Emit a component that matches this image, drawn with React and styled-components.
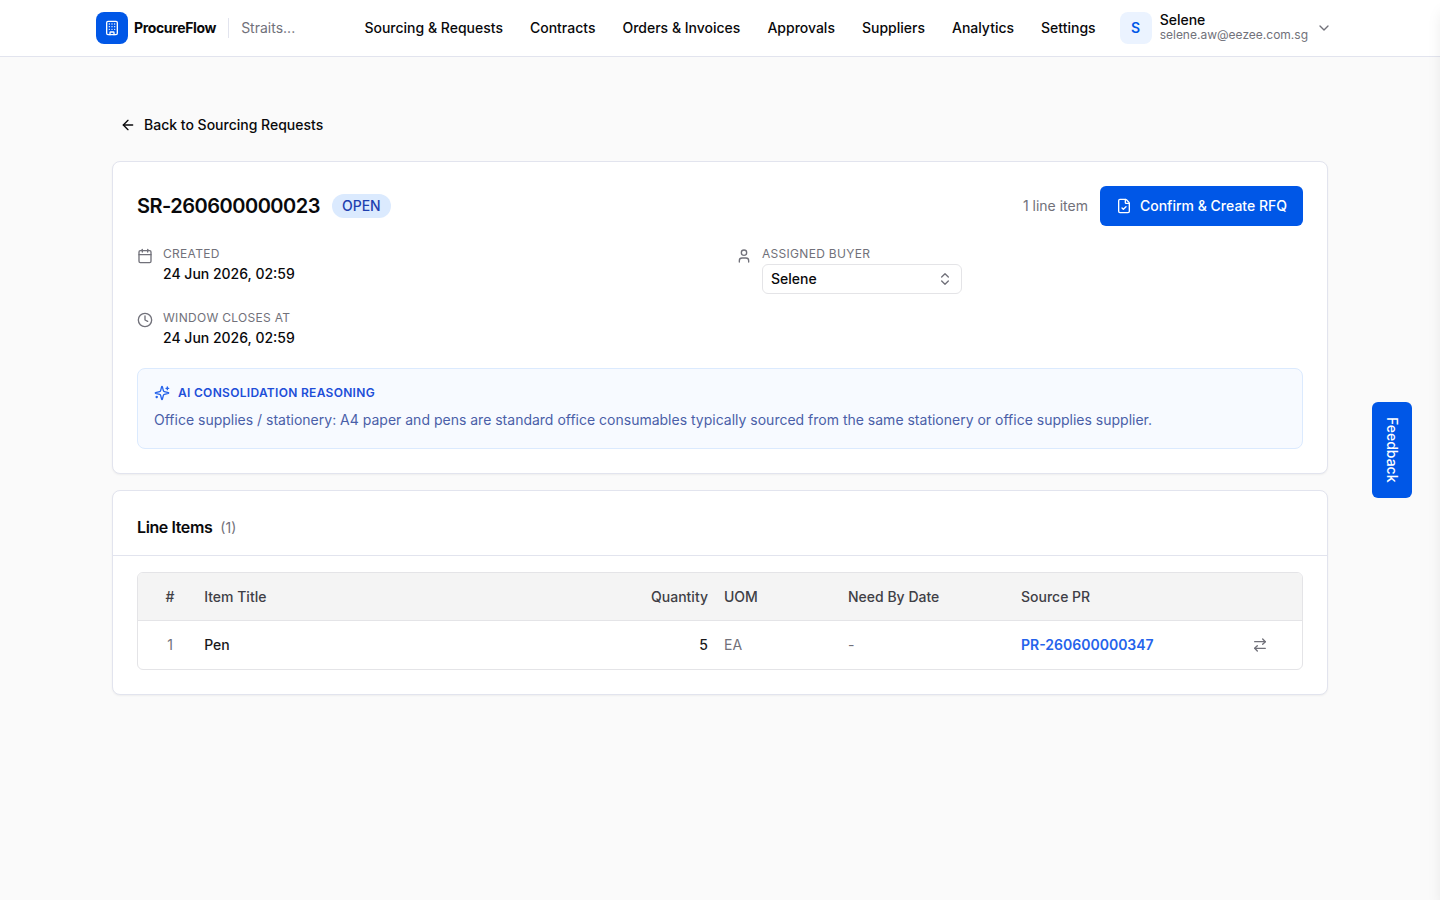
import React, { useState } from 'react';
import styled, { createGlobalStyle } from 'styled-components';
import {
  ArrowLeft,
  ArrowRightLeft,
  Building,
  Calendar,
  ChevronDown,
  ChevronsUpDown,
  Clock,
  FileCheck,
  User,
} from 'lucide-react';

const navLinks = [
  'Sourcing & Requests',
  'Contracts',
  'Orders & Invoices',
  'Approvals',
  'Suppliers',
  'Analytics',
  'Settings',
];

const lineItems = [
  { id: 1, title: 'Pen', quantity: 5, uom: 'EA', needBy: '-', pr: 'PR-260600000347' },
];

const GlobalStyle = createGlobalStyle`
  *,
  *::before,
  *::after {
    box-sizing: border-box;
  }

  body {
    margin: 0;
    background: #fafafa;
    color: #09090b;
    font-family: Inter, 'Liberation Sans', sans-serif;
    font-size: 14px;
    line-height: 20px;
    overflow-x: hidden;
    -webkit-font-smoothing: antialiased;
  }

  button,
  select {
    font: inherit;
    color: inherit;
  }

  h1,
  h2,
  p {
    margin: 0;
  }

  a {
    color: inherit;
    text-decoration: none;
  }

  svg {
    flex-shrink: 0;
  }
`;

const Header = styled.header`
  background: #fff;
  border-bottom: 1px solid #e2e4ee;
`;

const HeaderInner = styled.div`
  max-width: 1280px;
  height: 56px;
  margin: 0 auto;
  padding: 0 28px 0 16px;
  display: flex;
  align-items: center;
  justify-content: space-between;
`;

const Brand = styled.a`
  display: flex;
  align-items: center;
  gap: 6px;
`;

const Logo = styled.span`
  width: 32px;
  height: 32px;
  display: grid;
  place-items: center;
  border-radius: 8px;
  background: #0057e7;
  color: #fff;
`;

const BrandName = styled.span`
  font-weight: 700;
  letter-spacing: -0.025em;
`;

const Company = styled.span`
  margin-left: 6px;
  padding-left: 12px;
  border-left: 1px solid #e2e4ee;
  color: #71717a;
`;

const HeaderRight = styled.div`
  display: flex;
  align-items: center;
  gap: 24px;
`;

const Nav = styled.nav`
  display: flex;
  gap: 27px;
  font-weight: 500;
  white-space: nowrap;
`;

const Account = styled.button`
  display: flex;
  align-items: center;
  gap: 8px;
  padding: 0;
  border: 0;
  background: none;
  text-align: left;
`;

const Avatar = styled.span`
  width: 32px;
  height: 32px;
  display: grid;
  place-items: center;
  border-radius: 8px;
  background: #ebf3ff;
  color: #0057e7;
  font-weight: 600;
`;

const AccountText = styled.span`
  display: flex;
  flex-direction: column;
  line-height: 14px;
  font-weight: 500;

  small {
    font-size: 12px;
    line-height: 16px;
    font-weight: 400;
    color: #71717a;
  }
`;

const Main = styled.main`
  max-width: 1280px;
  margin: 0 auto;
  padding: 48px 32px;
  display: flex;
  flex-direction: column;
  gap: 16px;
`;

const BackLink = styled.a`
  align-self: flex-start;
  height: 40px;
  padding: 0 8px;
  display: flex;
  align-items: center;
  gap: 8px;
  font-weight: 500;
`;

const Card = styled.section`
  background: #fff;
  border: 1px solid #e2e4ee;
  border-radius: 8px;
  box-shadow: 0 1px 2px rgba(0, 0, 0, 0.05);
`;

const Summary = styled(Card)`
  padding: 24px;
`;

const SummaryTop = styled.div`
  display: flex;
  align-items: center;
  gap: 12px;
  margin-bottom: 18px;
`;

const Title = styled.h1`
  font-size: 20px;
  line-height: 28px;
  font-weight: 600;
  letter-spacing: -0.025em;
`;

const Badge = styled.span`
  padding: 2px 10px;
  border-radius: 12px;
  background: #dbeafe;
  color: #1e40af;
  font-weight: 500;
`;

const Count = styled.span`
  margin-left: auto;
  color: #71717a;
`;

const PrimaryButton = styled.button`
  height: 40px;
  padding: 0 16px;
  display: flex;
  align-items: center;
  gap: 8px;
  border: 0;
  border-radius: 6px;
  background: #0057e7;
  color: #fff;
  font-weight: 500;
`;

const Details = styled.div`
  display: grid;
  grid-template-columns: 1fr 1fr;
  gap: 14px 32px;
  margin-bottom: 20px;
`;

const Detail = styled.div`
  display: flex;
  gap: 10px;

  > svg {
    margin-top: 4px;
    color: #71717a;
  }
`;

const Label = styled.label`
  display: block;
  color: #71717a;
  font-size: 12px;
  letter-spacing: 0.025em;
  text-transform: uppercase;
`;

const Value = styled.output`
  display: block;
  font-weight: 500;
`;

const SelectBox = styled.div`
  position: relative;
  width: 200px;

  select {
    display: block;
    width: 100%;
    height: 30px;
    padding: 0 8px;
    border: 1px solid #e4e4e7;
    border-radius: 6px;
    background: #fff;
    font-weight: 500;
    appearance: none;
  }

  svg {
    position: absolute;
    top: 7px;
    right: 9px;
    color: #71717a;
    pointer-events: none;
  }
`;

const Reasoning = styled.div`
  padding: 14px 16px 18px;
  border: 1px solid #dbeafe;
  border-radius: 8px;
  background: #f7faff;
  color: #4a5fa8;
`;

const ReasoningTitle = styled.h2`
  display: flex;
  align-items: center;
  gap: 8px;
  margin-bottom: 7px;
  color: #1d4ed8;
  font-size: 12px;
  line-height: 20px;
  font-weight: 600;
  letter-spacing: 0.025em;
  text-transform: uppercase;
`;

const CardHeader = styled.div`
  display: flex;
  align-items: baseline;
  gap: 8px;
  padding: 24px 24px 16px;
  border-bottom: 1px solid #e2e4ee;
  color: #71717a;
`;

const CardTitle = styled.h2`
  color: #09090b;
  font-size: 16px;
  line-height: 24px;
  font-weight: 600;
  letter-spacing: -0.025em;
`;

const TableFrame = styled.div`
  margin: 16px 24px 24px;
  border: 1px solid #e4e4e7;
  border-radius: 6px;
  overflow: hidden;
`;

const Table = styled.table`
  width: 100%;
  border-collapse: separate;
  border-spacing: 0;
  table-layout: fixed;

  th,
  td {
    height: 48px;
    padding: 0 8px;
  }

  th:first-child,
  td:first-child {
    padding-left: 14px;
  }
`;

const HeadCell = styled.th`
  width: ${(props) => props.$width || 'auto'};
  background: #f4f4f4;
  border-bottom: 1px solid #e4e4e7;
  color: #3f3f46;
  font-weight: 500;
  text-align: ${(props) => props.$align || 'left'};
`;

const Cell = styled.td`
  color: ${(props) => (props.$muted ? '#71717a' : '#18181b')};
  font-weight: ${(props) => (props.$muted ? 400 : 500)};
  text-align: ${(props) => props.$align || 'left'};
`;

const PrLink = styled.a`
  color: #2563eb;
  font-weight: 600;
`;

const IconButton = styled.button`
  width: 32px;
  height: 32px;
  display: inline-grid;
  place-items: center;
  padding: 0;
  border: 0;
  background: none;
  color: #71717a;
  vertical-align: middle;
`;

const FeedbackButton = styled.button`
  position: fixed;
  top: 50%;
  right: 28px;
  width: 40px;
  height: 96px;
  margin-top: -48px;
  padding: 0;
  display: flex;
  align-items: center;
  justify-content: center;
  border: 0;
  border-radius: 6px;
  background: #0057e7;
  color: #fff;
  font-weight: 500;
  writing-mode: vertical-rl;
`;

// closed side drawer, only its shadow reaches the page
const Drawer = styled.aside`
  position: fixed;
  top: 0;
  bottom: 0;
  left: 100%;
  width: 400px;
  background: #fff;
  box-shadow: 0 10px 15px -3px rgba(0, 0, 0, 0.1), 0 4px 6px -4px rgba(0, 0, 0, 0.1);
`;

const SparklesIcon = () => (
  <svg
    width="16"
    height="16"
    viewBox="0 0 24 24"
    fill="none"
    stroke="#2563eb"
    strokeWidth="2"
    strokeLinecap="round"
    strokeLinejoin="round"
    aria-hidden="true"
  >
    <path d="M9.937 15.5A2 2 0 0 0 8.5 14.063l-6.135-1.582a.5.5 0 0 1 0-.962L8.5 9.936A2 2 0 0 0 9.937 8.5l1.582-6.135a.5.5 0 0 1 .963 0L14.063 8.5A2 2 0 0 0 15.5 9.937l6.135 1.581a.5.5 0 0 1 0 .964L15.5 14.063a2 2 0 0 0-1.437 1.437l-1.582 6.135a.5.5 0 0 1-.963 0z" />
    <path d="M20 3v4" />
    <path d="M22 5h-4" />
    <path d="M4 17v2" />
    <path d="M5 18H3" />
  </svg>
);

const App = () => {
  const [buyer, setBuyer] = useState('Selene');

  return (
    <>
      <GlobalStyle />
      <Header>
        <HeaderInner>
          <Brand href="#">
            <Logo>
              <Building size={16} />
            </Logo>
            <BrandName>ProcureFlow</BrandName>
            <Company>Straits...</Company>
          </Brand>
          <HeaderRight>
            <Nav>
              {navLinks.map((link) => (
                <a key={link} href="#">{link}</a>
              ))}
            </Nav>
            <Account>
              <Avatar>S</Avatar>
              <AccountText>
                Selene
                <small>selene.aw@eezee.com.sg</small>
              </AccountText>
              <ChevronDown size={16} color="#71717a" />
            </Account>
          </HeaderRight>
        </HeaderInner>
      </Header>

      <Main>
        <BackLink href="#">
          <ArrowLeft size={16} />
          Back to Sourcing Requests
        </BackLink>

        <Summary>
          <SummaryTop>
            <Title>SR-260600000023</Title>
            <Badge>OPEN</Badge>
            <Count>1 line item</Count>
            <PrimaryButton>
              <FileCheck size={16} />
              Confirm &amp; Create RFQ
            </PrimaryButton>
          </SummaryTop>

          <Details>
            <Detail>
              <Calendar size={16} />
              <div>
                <Label htmlFor="created">Created</Label>
                <Value id="created">24 Jun 2026, 02:59</Value>
              </div>
            </Detail>
            <Detail>
              <User size={16} />
              <div>
                <Label htmlFor="buyer">Assigned Buyer</Label>
                <SelectBox>
                  <select id="buyer" value={buyer} onChange={(e) => setBuyer(e.target.value)}>
                    <option>Selene</option>
                  </select>
                  <ChevronsUpDown size={16} />
                </SelectBox>
              </div>
            </Detail>
            <Detail>
              <Clock size={16} />
              <div>
                <Label htmlFor="closes">Window Closes At</Label>
                <Value id="closes">24 Jun 2026, 02:59</Value>
              </div>
            </Detail>
          </Details>

          <Reasoning>
            <ReasoningTitle>
              <SparklesIcon />
              AI Consolidation Reasoning
            </ReasoningTitle>
            <p>
              Office supplies / stationery: A4 paper and pens are standard office consumables
              typically sourced from the same stationery or office supplies supplier.
            </p>
          </Reasoning>
        </Summary>

        <Card>
          <CardHeader>
            <CardTitle>Line Items</CardTitle>
            <span>(1)</span>
          </CardHeader>
          <TableFrame>
            <Table>
              <thead>
                <tr>
                  <HeadCell $width="5%" $align="center">#</HeadCell>
                  <HeadCell>Item Title</HeadCell>
                  <HeadCell $width="10%" $align="right">Quantity</HeadCell>
                  <HeadCell $width="124px">UOM</HeadCell>
                  <HeadCell $width="173px">Need By Date</HeadCell>
                  <HeadCell $width="205px">Source PR</HeadCell>
                  <HeadCell $width="84px" aria-label="Actions" />
                </tr>
              </thead>
              <tbody>
                {lineItems.map((item) => (
                  <tr key={item.id}>
                    <Cell $muted $align="center">{item.id}</Cell>
                    <Cell>{item.title}</Cell>
                    <Cell $align="right">{item.quantity}</Cell>
                    <Cell $muted>{item.uom}</Cell>
                    <Cell $muted>{item.needBy}</Cell>
                    <Cell>
                      <PrLink href="#">{item.pr}</PrLink>
                    </Cell>
                    <Cell $align="center">
                      <IconButton aria-label="Move item">
                        <ArrowRightLeft size={16} />
                      </IconButton>
                    </Cell>
                  </tr>
                ))}
              </tbody>
            </Table>
          </TableFrame>
        </Card>
      </Main>

      <FeedbackButton>Feedback</FeedbackButton>
      <Drawer />
    </>
  );
};

export default App;
